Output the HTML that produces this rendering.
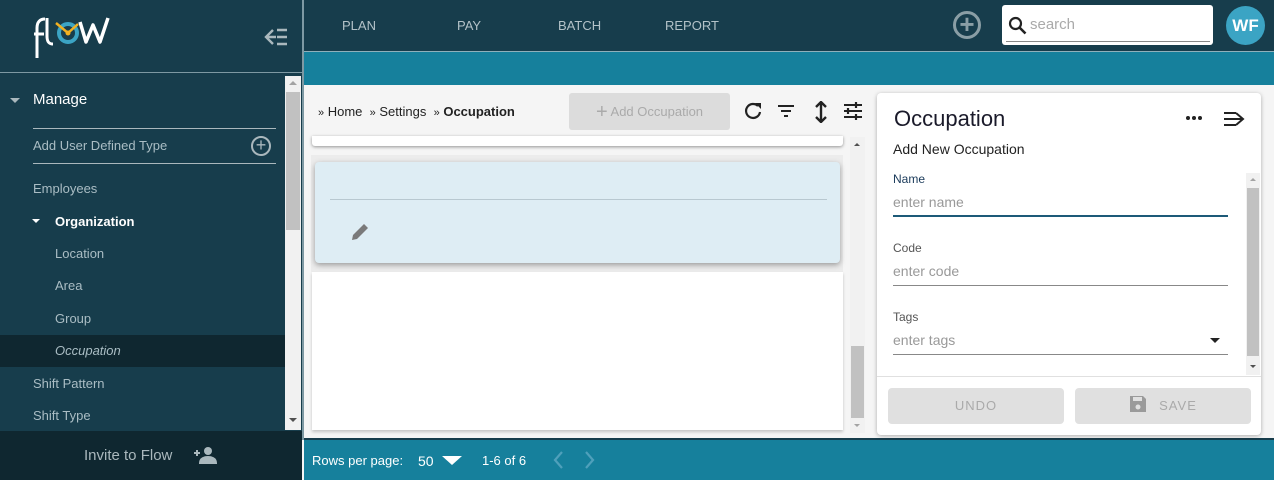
<!DOCTYPE html>
<html><head><style>
*{box-sizing:border-box;margin:0;padding:0}
body{width:1274px;height:480px;overflow:hidden;font-family:"Liberation Sans",sans-serif;background:#f5f5f5;position:relative}
.a{position:absolute}
.sb{left:0;top:0;width:302px;height:480px;background:#173d4c}
.nav{color:#b3c2c8;font-size:13px}
.nav span{position:absolute}
.it{color:#aabdc4;font-size:13px;position:absolute}
</style></head><body>
<div class="a sb"></div>
<!-- logo -->
<svg class="a" style="left:34px;top:14px" width="82" height="46" viewBox="0 0 82 46">
<path d="M3 44V14c0-6 3-9 8-9" stroke="#fff" stroke-width="3" fill="none"/>
<path d="M0 20h10" stroke="#fff" stroke-width="3"/>
<path d="M13 4v18c0 6 2 8 6 8" stroke="#fff" stroke-width="3" fill="none"/>
<circle cx="34" cy="19" r="9" stroke="#3ba4c4" stroke-width="4" fill="none"/>
<path d="M22 9l12 10 10-9" stroke="#f0b020" stroke-width="2.5" fill="none"/>
<circle cx="34" cy="19" r="2.5" fill="#f0b020"/>
<path d="M46 8l6 20 7-17 7 17 8-24" stroke="#fff" stroke-width="3.5" fill="none" stroke-linejoin="round"/>
</svg>
<svg class="a" style="left:264px;top:28px" width="24" height="18" viewBox="0 0 24 18"><path d="M9 2L2 9l7 7M2 9h10M13 2h10M13 9h10M13 16h10" stroke="#aab8bd" stroke-width="2.4" fill="none"/></svg>
<div class="a" style="left:0;top:72px;width:302px;height:1px;background:#7e99a3"></div>
<!-- scrollbar -->
<div class="a" style="left:285px;top:76px;width:16px;height:354px;background:#f1f1f1"></div>
<div class="a" style="left:286px;top:92px;width:14px;height:138px;background:#c1c1c1"></div>
<div class="a" style="left:289px;top:81px;border:4px solid transparent;border-bottom-color:#a3a3a3;border-top:0"></div>
<div class="a" style="left:289px;top:418px;border:4px solid transparent;border-top-color:#505050;border-bottom:0"></div>
<div class="a" style="left:10px;top:98px;border:5px solid transparent;border-top-color:#aab8bd;border-bottom:0"></div>
<div class="a" style="left:33px;top:91px;color:#fff;font-size:15px">Manage</div>
<div class="a" style="left:33px;top:128px;width:243px;height:1px;background:#aab8bd"></div>
<div class="it" style="left:33px;top:138px">Add User Defined Type</div>
<div class="a" style="left:251px;top:136px;width:20px;height:20px;border:2px solid #aab8bd;border-radius:50%;color:#aab8bd;font-size:18px;line-height:15px;text-align:center">+</div>
<div class="a" style="left:33px;top:163px;width:243px;height:1px;background:#aab8bd"></div>
<div class="it" style="left:33px;top:181px">Employees</div>
<div class="a" style="left:32px;top:219px;border:4.5px solid transparent;border-top-color:#fff;border-bottom:0"></div>
<div class="it" style="left:55px;top:214px;color:#fff;font-weight:bold">Organization</div>
<div class="it" style="left:55px;top:246px">Location</div>
<div class="it" style="left:55px;top:278px">Area</div>
<div class="it" style="left:55px;top:311px">Group</div>
<div class="a" style="left:0;top:335px;width:285px;height:32px;background:#0f2730"></div>
<div class="it" style="left:55px;top:343px;font-style:italic">Occupation</div>
<div class="it" style="left:33px;top:376px">Shift Pattern</div>
<div class="it" style="left:33px;top:408px">Shift Type</div>
<div class="a" style="left:0;top:431px;width:302px;height:49px;background:#0f2730"></div>
<div class="a" style="left:84px;top:447px;color:#aab8bd;font-size:15px">Invite to Flow</div>
<svg class="a" style="left:193px;top:446px" width="24" height="18" viewBox="0 0 24 18"><circle cx="15" cy="5" r="4" fill="#aab8bd"/><path d="M7 17c0-5 5-6 8-6s8 1 8 6z M1 7h6M4 4v6" fill="#aab8bd" stroke="#aab8bd" stroke-width="2"/></svg>
<!-- top bar -->
<div class="a" style="left:302px;top:0;width:2px;height:440px;background:#7e99a3"></div>
<div class="a" style="left:304px;top:0;width:970px;height:51px;background:#173d4c"></div>
<div class="a" style="left:304px;top:51px;width:970px;height:1px;background:#8fb0bb"></div>
<div class="a" style="left:304px;top:52px;width:970px;height:33px;background:#16809c"></div>
<div class="nav"><span style="left:342px;top:18px">PLAN</span><span style="left:457px;top:18px">PAY</span><span style="left:558px;top:18px">BATCH</span><span style="left:665px;top:18px">REPORT</span></div>
<div class="a" style="left:953px;top:11px;width:28px;height:28px;border:3px solid #8a9ea5;border-radius:50%;color:#8a9ea5;font-size:26px;line-height:20px;text-align:center;font-weight:bold">+</div>
<div class="a" style="left:1002px;top:5px;width:211px;height:40px;background:#fff;border-radius:3px"></div>
<div class="a" style="left:1006px;top:41px;width:204px;height:1px;background:#888"></div>
<svg class="a" style="left:1008px;top:16px" width="20" height="20" viewBox="0 0 20 20"><circle cx="7.5" cy="7.5" r="5.5" stroke="#222" stroke-width="2.2" fill="none"/><path d="M11.5 11.5l6 6" stroke="#222" stroke-width="2.6"/></svg>
<div class="a" style="left:1030px;top:16px;color:#aaa;font-size:15px">search</div>
<div class="a" style="left:1226px;top:6px;width:39px;height:39px;border-radius:50%;background:#3ba4c4;color:#fff;font-weight:bold;font-size:17px;line-height:39px;text-align:center">WF</div>
<!-- breadcrumb -->
<div class="a" style="left:318px;top:104px;font-size:13px;color:#222"><span style="font-size:11px">»</span> Home &nbsp;<span style="font-size:11px">»</span> Settings &nbsp;<span style="font-size:11px">»</span> <b>Occupation</b></div>
<div class="a" style="left:569px;top:93px;width:161px;height:37px;background:#dcdcdc;border-radius:3px;color:#aaa;font-size:13px;line-height:37px;text-align:center"><span style="font-size:20px;vertical-align:-2px">+</span> Add Occupation</div>
<svg class="a" style="left:743px;top:101px" width="124" height="22" viewBox="0 0 124 22"><path d="M15 5a7 7 0 1 0 2 6" stroke="#222" stroke-width="2.2" fill="none"/><path d="M12 2h6v6z" fill="#222"/><path d="M35 5h16M38 10h10M41 15h4" stroke="#222" stroke-width="2"/><path d="M78 2v18M73 6l5-5 5 5M73 16l5 5 5-5" stroke="#222" stroke-width="2.4" fill="none"/><path d="M101 4h18M101 10h18M101 16h18" stroke="#222" stroke-width="2"/><path d="M113 1v6M105 7v6M113 13v6" stroke="#222" stroke-width="2.2"/><path d="M101 4h10M111 10h8M101 16h10" stroke="#f5f5f5" stroke-width="0"/></svg>
<!-- list -->
<div class="a" style="left:312px;top:136px;width:531px;height:10px;background:#fff;box-shadow:0 1px 3px rgba(0,0,0,.4);border-radius:0 0 3px 3px"></div>
<div class="a" style="left:311px;top:155px;width:532px;height:117px;background:#ececec"></div>
<div class="a" style="left:312px;top:272px;width:531px;height:158px;background:#fff;box-shadow:0 2px 3px rgba(0,0,0,.2)"></div>
<div class="a" style="left:315px;top:162px;width:525px;height:101px;background:#deedf4;border-radius:4px;box-shadow:0 2px 6px rgba(0,0,0,.35)"></div>
<div class="a" style="left:330px;top:199px;width:497px;height:1px;background:#b8c8d0"></div>
<svg class="a" style="left:350px;top:222px" width="20" height="20" viewBox="0 0 20 20"><path d="M2 18l1-5L14 2l4 4L7 17z" fill="#7a7a7a"/></svg>
<div class="a" style="left:850px;top:137px;width:15px;height:296px;background:#f1f1f1"></div>
<div class="a" style="left:851px;top:346px;width:13px;height:72px;background:#c1c1c1"></div>
<div class="a" style="left:854px;top:143px;border:3.5px solid transparent;border-bottom-color:#505050;border-top:0"></div>
<div class="a" style="left:854px;top:424px;border:3.5px solid transparent;border-top-color:#a3a3a3;border-bottom:0"></div>
<!-- bottom bar -->
<div class="a" style="left:304px;top:438px;width:970px;height:2px;background:#173d4c"></div>
<div class="a" style="left:304px;top:440px;width:970px;height:40px;background:#16809c"></div>
<div class="a" style="left:312px;top:453px;color:#fff;font-size:13px">Rows per page:</div>
<div class="a" style="left:418px;top:453px;color:#fff;font-size:14px">50</div>
<div class="a" style="left:442px;top:456px;border:10px solid transparent;border-top:9px solid #fff;border-bottom:0"></div>
<div class="a" style="left:482px;top:453px;color:#fff;font-size:13px">1-6 of 6</div>
<svg class="a" style="left:548px;top:450px" width="52" height="20" viewBox="0 0 52 20"><path d="M14 2l-7 8 7 8M38 2l7 8-7 8" stroke="#4fa0bb" stroke-width="2.2" fill="none"/></svg>
<!-- right panel -->
<div class="a" style="left:877px;top:93px;width:384px;height:342px;background:#fff;border-radius:4px;box-shadow:0 1px 4px rgba(0,0,0,.3)"></div>
<div class="a" style="left:894px;top:106px;font-size:22px;color:#1a1a2a">Occupation</div>
<svg class="a" style="left:1185px;top:115px" width="18" height="6" viewBox="0 0 18 6"><circle cx="3" cy="3" r="2" fill="#222"/><circle cx="9" cy="3" r="2" fill="#222"/><circle cx="15" cy="3" r="2" fill="#222"/></svg>
<svg class="a" style="left:1223px;top:110px" width="22" height="18" viewBox="0 0 22 18"><path d="M1 3h12M1 9h18M1 15h12M13 3l7 6-7 6" stroke="#222" stroke-width="2" fill="none"/></svg>
<div class="a" style="left:893px;top:141px;font-size:14px;color:#222">Add New Occupation</div>
<div class="a" style="left:893px;top:172px;font-size:12px;color:#1a3a5a">Name</div>
<div class="a" style="left:893px;top:194px;font-size:14px;color:#999">enter name</div>
<div class="a" style="left:893px;top:215px;width:335px;height:2px;background:#1d5a78"></div>
<div class="a" style="left:893px;top:241px;font-size:12px;color:#555">Code</div>
<div class="a" style="left:893px;top:263px;font-size:14px;color:#999">enter code</div>
<div class="a" style="left:893px;top:285px;width:335px;height:1px;background:#888"></div>
<div class="a" style="left:893px;top:310px;font-size:12px;color:#555">Tags</div>
<div class="a" style="left:893px;top:332px;font-size:14px;color:#999">enter tags</div>
<div class="a" style="left:1210px;top:338px;border:5px solid transparent;border-top-color:#222;border-bottom:0"></div>
<div class="a" style="left:893px;top:354px;width:335px;height:1px;background:#888"></div>
<div class="a" style="left:1246px;top:173px;width:14px;height:202px;background:#f1f1f1"></div>
<div class="a" style="left:1247px;top:188px;width:12px;height:168px;background:#c1c1c1"></div>
<div class="a" style="left:1250px;top:178px;border:3.5px solid transparent;border-bottom-color:#a3a3a3;border-top:0"></div>
<div class="a" style="left:1250px;top:365px;border:3.5px solid transparent;border-top-color:#505050;border-bottom:0"></div>
<div class="a" style="left:877px;top:376px;width:384px;height:1px;background:#e0e0e0"></div>
<div class="a" style="left:888px;top:388px;width:176px;height:36px;background:#e0e0e0;border-radius:4px;color:#aaa;font-size:13px;line-height:36px;text-align:center;letter-spacing:1px">UNDO</div>
<div class="a" style="left:1075px;top:388px;width:176px;height:36px;background:#e0e0e0;border-radius:4px;color:#aaa;font-size:13px;line-height:36px;text-align:center;letter-spacing:1px"><svg width="18" height="18" viewBox="0 0 18 18" style="vertical-align:-3px;margin-right:12px"><path d="M1 1h13l3 3v13H1z" fill="#9a9a9a"/><rect x="4" y="2" width="9" height="4" fill="#e0e0e0"/><circle cx="9" cy="12" r="2.5" fill="#e0e0e0"/></svg>SAVE</div>
</body></html>
